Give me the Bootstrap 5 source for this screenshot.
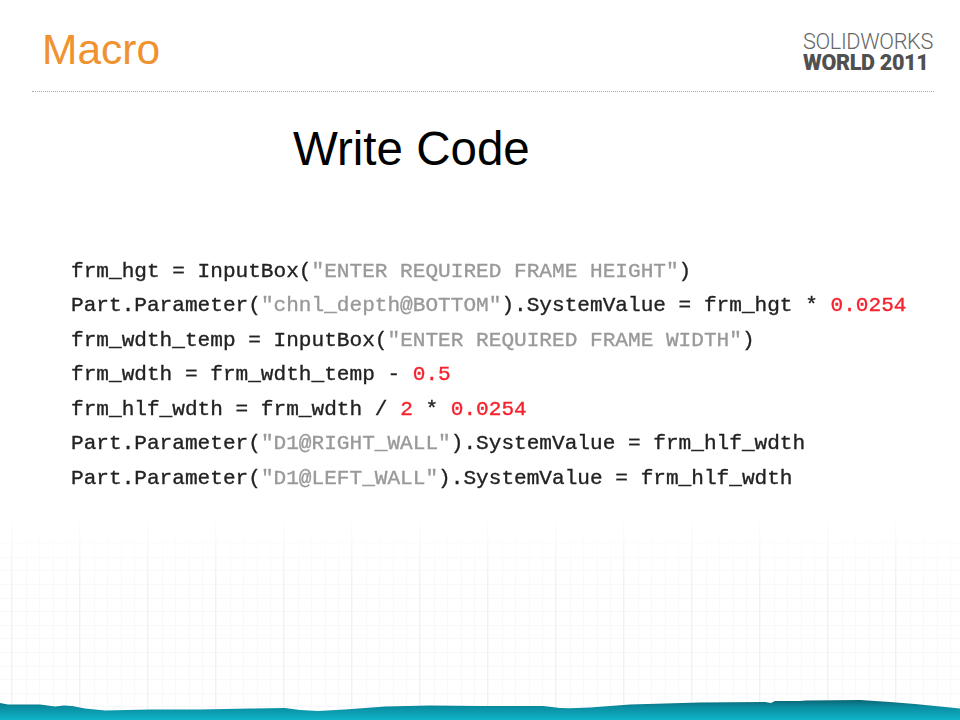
<!DOCTYPE html>
<html lang="en">
<head>
<meta charset="utf-8">
<title>Macro</title>
<link href="https://cdn.jsdelivr.net/npm/bootstrap@5.3.0/dist/css/bootstrap.min.css" rel="stylesheet">
<style>
html, body { margin: 0; background: #fff; }
.slide-frame { position: relative; width: 960px; height: 720px; overflow: hidden; background: #fff; font-family: "Liberation Sans", Arial, sans-serif; }
.slide-head { height: 92px; margin: 0 26px 0 32px; border-bottom: 1px dotted #aaa; padding-top: 21px; }
.slide-title { font-size: 42.5px; line-height: 58px; color: #f0922f; padding-left: 10px; margin: 0; font-weight: 400; }
.logo-box { width: 131px; padding-top: 9.5px; white-space: nowrap; }
.logo-top { font-family: Roboto, Lato, sans-serif; font-weight: 300; font-size: 21.7px; line-height: 21.5px; color: #666; letter-spacing: -.35px; }
.logo-bot { font-family: Roboto, Lato, sans-serif; font-weight: 900; font-size: 21.6px; line-height: 21.5px; color: #505050; letter-spacing: -.35px; }
.slide-heading { font-size: 47.5px; line-height: 54px; color: #000; margin: 30px 0 0 293px; font-weight: 400; }
.code-block { margin: 77.5px 0 0 71px; font-family: "Liberation Mono", "Courier New", monospace; font-size: 21.1px; color: #222; filter: blur(.35px); }
.code-line { height: 34.5px; line-height: 34.5px; white-space: pre; -webkit-text-stroke: .35px #222; }
.code-str { color: #999; -webkit-text-stroke: .35px #999; }
.code-num { color: #f5222d; -webkit-text-stroke: .35px #f5222d; }
.grid-bg { position: absolute; left: 0; right: 0; top: 510px; bottom: 0;
  background-image:
    repeating-linear-gradient(90deg, transparent 0 11px, #f0f1f7 11px 12px, transparent 12px 68px),
    repeating-linear-gradient(90deg, transparent 0 12px, #f9f9fc 12px 13px, transparent 13px 13.6px),
    repeating-linear-gradient(0deg, transparent 0 12.6px, #f8f8fc 12.6px 13.6px);
  -webkit-mask-image: linear-gradient(to bottom, transparent, #000 70px);
  mask-image: linear-gradient(to bottom, transparent, #000 70px); }
.wave-art { position: absolute; left: 0; bottom: 0; width: 960px; height: 24px; display: block; }
</style>
</head>
<body>
<div class="slide-frame">
  <div class="grid-bg"></div>
  <div class="slide-head d-flex justify-content-between align-items-start">
    <h1 class="slide-title">Macro</h1>
    <div class="logo-box">
      <div class="logo-top">SOLIDWORKS</div>
      <div class="logo-bot">WORLD 2011</div>
    </div>
  </div>
  <h2 class="slide-heading">Write Code</h2>
  <div class="code-block">
    <div class="code-line">frm_hgt = InputBox(<span class="code-str">"ENTER REQUIRED FRAME HEIGHT"</span>)</div>
    <div class="code-line">Part.Parameter(<span class="code-str">"chnl_depth@BOTTOM"</span>).SystemValue = frm_hgt * <span class="code-num">0.0254</span></div>
    <div class="code-line">frm_wdth_temp = InputBox(<span class="code-str">"ENTER REQUIRED FRAME WIDTH"</span>)</div>
    <div class="code-line">frm_wdth = frm_wdth_temp - <span class="code-num">0.5</span></div>
    <div class="code-line">frm_hlf_wdth = frm_wdth / <span class="code-num">2</span> * <span class="code-num">0.0254</span></div>
    <div class="code-line">Part.Parameter(<span class="code-str">"D1@RIGHT_WALL"</span>).SystemValue = frm_hlf_wdth</div>
    <div class="code-line">Part.Parameter(<span class="code-str">"D1@LEFT_WALL"</span>).SystemValue = frm_hlf_wdth</div>
  </div>
  <svg class="wave-art" viewBox="0 696 960 24" aria-hidden="true">
    <defs>
      <linearGradient id="sea" x1="0" y1="0" x2="0" y2="1">
        <stop offset="0" stop-color="#0a6675"/>
        <stop offset=".35" stop-color="#0a8c9f"/>
        <stop offset="1" stop-color="#0fb4ca"/>
      </linearGradient>
    </defs>
    <path fill="url(#sea)" d="M0 703 L8 704.5 L40 704.5 L55 706.5 L64 705.5 L72 706 L85 708.5 L105 710.5 L150 709.5 L200 709.5 L250 708.5 L285 708 L300 710 L318 711 L345 709.5 L385 706.5 L430 705.5 L480 706 L543 706 L560 708 L570 708.3 L590 707.5 L630 704.5 L700 702.5 L765 702 L771 703 L775 701 L800 701 L806 700.5 L860 700 L890 702 L915 704 L960 708.5 L960 720 L0 720 Z"/>
  </svg>
</div>
<script src="https://cdn.jsdelivr.net/npm/bootstrap@5.3.0/dist/js/bootstrap.bundle.min.js"></script>
</body>
</html>
